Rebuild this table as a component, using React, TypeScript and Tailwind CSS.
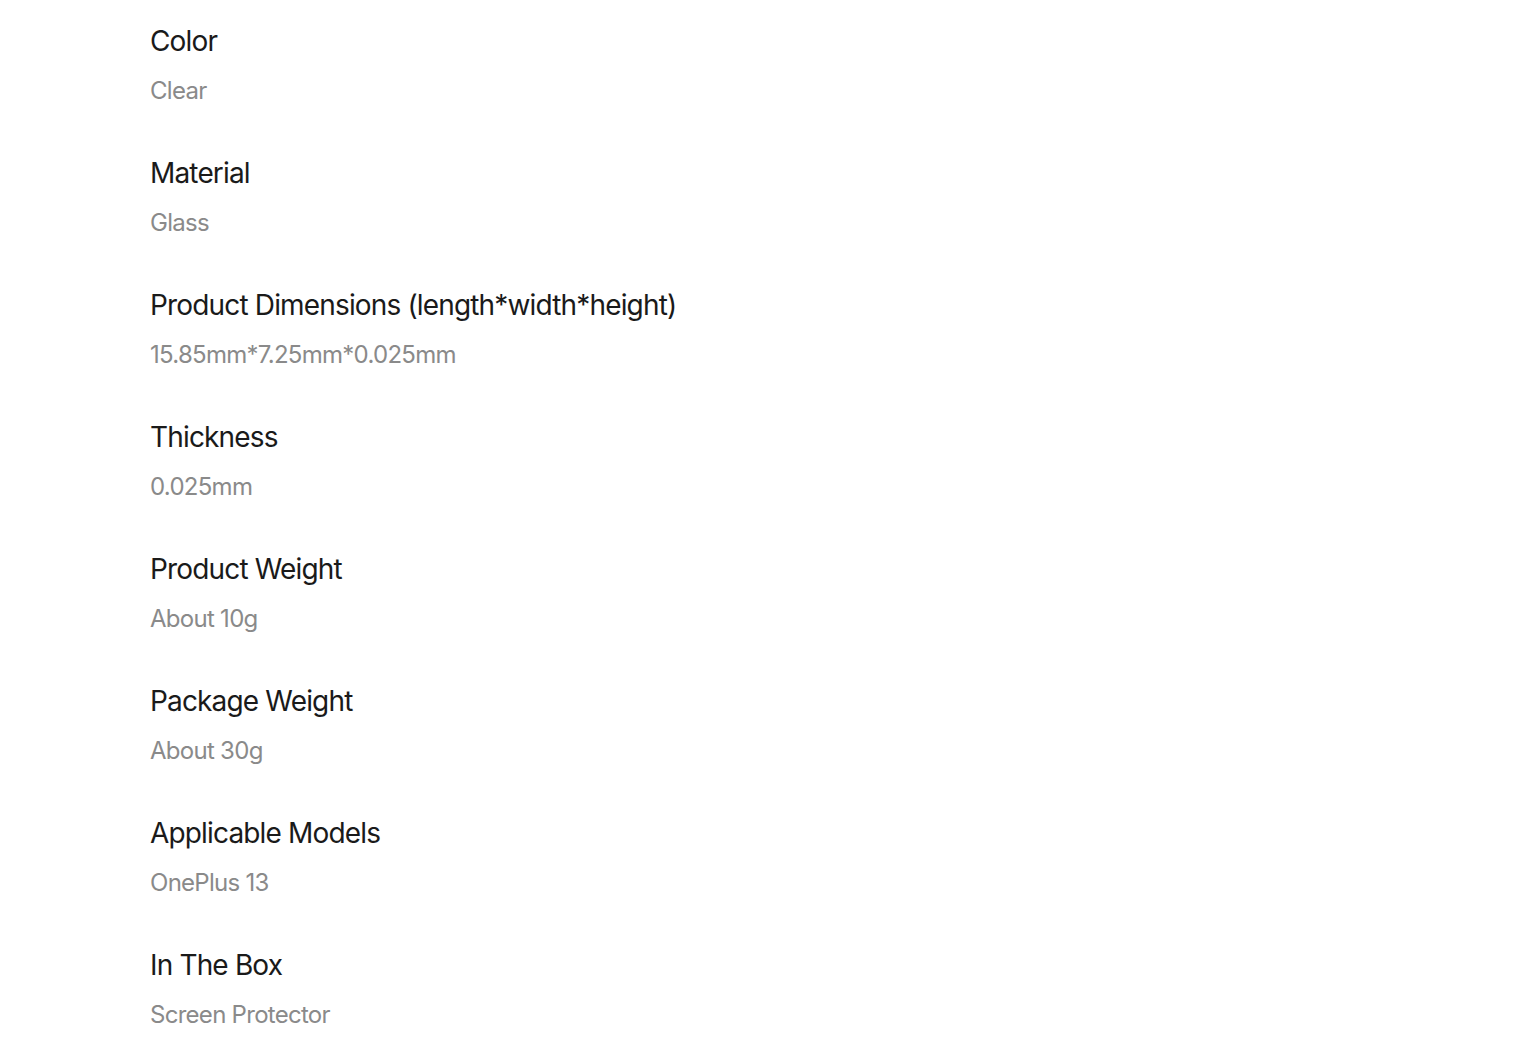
export default function App() {
  const specs = [
    { label: "Color", value: "Clear" },
    { label: "Material", value: "Glass" },
    { label: "Product Dimensions (length*width*height)", value: "15.85mm*7.25mm*0.025mm" },
    { label: "Thickness", value: "0.025mm" },
    { label: "Product Weight", value: "About 10g" },
    { label: "Package Weight", value: "About 30g" },
    { label: "Applicable Models", value: "OnePlus 13" },
    { label: "In The Box", value: "Screen Protector" },
  ]

  return (
    <div className="min-h-screen bg-white font-['Inter',sans-serif]">
      <div className="pl-[150px] pt-[21px] flex flex-col gap-[46px]">
        {specs.map((spec, index) => (
          <div key={index} className="flex flex-col">
            <div className="text-[28px] leading-[40px] tracking-[-0.03em] text-[#1a1a1a]">{spec.label}</div>
            <div className="mt-[14px] text-[24px] leading-[32px] tracking-[-0.03em] text-[#8a8a8a]">{spec.value}</div>
          </div>
        ))}
      </div>
    </div>
  )
}
